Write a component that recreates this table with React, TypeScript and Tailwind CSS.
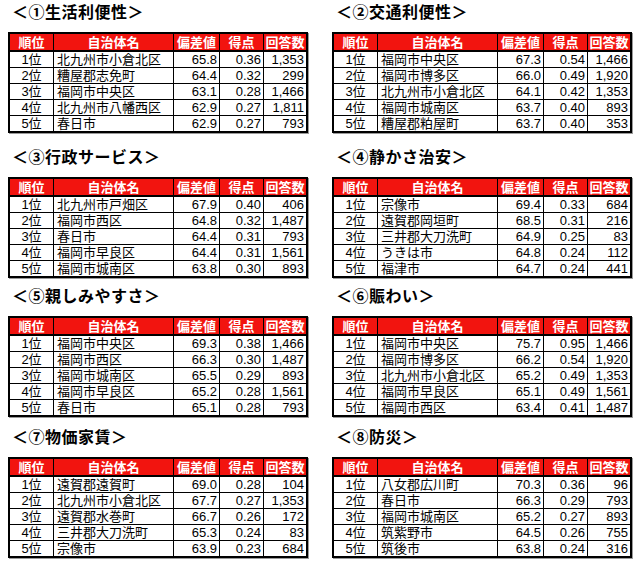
import React from "react";

type Row = [string, string, string, string];
type Block = { title: string; rows: Row[] };

const blocks: Block[] = [
  {
    title: "＜①生活利便性＞",
    rows: [
      ["北九州市小倉北区", "65.8", "0.36", "1,353"],
      ["糟屋郡志免町", "64.4", "0.32", "299"],
      ["福岡市中央区", "63.1", "0.28", "1,466"],
      ["北九州市八幡西区", "62.9", "0.27", "1,811"],
      ["春日市", "62.9", "0.27", "793"],
    ],
  },
  {
    title: "＜②交通利便性＞",
    rows: [
      ["福岡市中央区", "67.3", "0.54", "1,466"],
      ["福岡市博多区", "66.0", "0.49", "1,920"],
      ["北九州市小倉北区", "64.1", "0.42", "1,353"],
      ["福岡市城南区", "63.7", "0.40", "893"],
      ["糟屋郡粕屋町", "63.7", "0.40", "353"],
    ],
  },
  {
    title: "＜③行政サービス＞",
    rows: [
      ["北九州市戸畑区", "67.9", "0.40", "406"],
      ["福岡市西区", "64.8", "0.32", "1,487"],
      ["春日市", "64.4", "0.31", "793"],
      ["福岡市早良区", "64.4", "0.31", "1,561"],
      ["福岡市城南区", "63.8", "0.30", "893"],
    ],
  },
  {
    title: "＜④静かさ治安＞",
    rows: [
      ["宗像市", "69.4", "0.33", "684"],
      ["遠賀郡岡垣町", "68.5", "0.31", "216"],
      ["三井郡大刀洗町", "64.9", "0.25", "83"],
      ["うきは市", "64.8", "0.24", "112"],
      ["福津市", "64.7", "0.24", "441"],
    ],
  },
  {
    title: "＜⑤親しみやすさ＞",
    rows: [
      ["福岡市中央区", "69.3", "0.38", "1,466"],
      ["福岡市西区", "66.3", "0.30", "1,487"],
      ["福岡市城南区", "65.5", "0.29", "893"],
      ["福岡市早良区", "65.2", "0.28", "1,561"],
      ["春日市", "65.1", "0.28", "793"],
    ],
  },
  {
    title: "＜⑥賑わい＞",
    rows: [
      ["福岡市中央区", "75.7", "0.95", "1,466"],
      ["福岡市博多区", "66.2", "0.54", "1,920"],
      ["北九州市小倉北区", "65.2", "0.49", "1,353"],
      ["福岡市早良区", "65.1", "0.49", "1,561"],
      ["福岡市西区", "63.4", "0.41", "1,487"],
    ],
  },
  {
    title: "＜⑦物価家賃＞",
    rows: [
      ["遠賀郡遠賀町", "69.0", "0.28", "104"],
      ["北九州市小倉北区", "67.7", "0.27", "1,353"],
      ["遠賀郡水巻町", "66.7", "0.26", "172"],
      ["三井郡大刀洗町", "65.3", "0.24", "83"],
      ["宗像市", "63.9", "0.23", "684"],
    ],
  },
  {
    title: "＜⑧防災＞",
    rows: [
      ["八女郡広川町", "70.3", "0.36", "96"],
      ["春日市", "66.3", "0.29", "793"],
      ["福岡市城南区", "65.2", "0.27", "893"],
      ["筑紫野市", "64.5", "0.26", "755"],
      ["筑後市", "63.8", "0.24", "316"],
    ],
  },
];

function Table({ block }: { block: Block }) {
  return (
    <div className="flex flex-col">
      <div className="h-[32px] pl-[4px] pt-[2px] text-[16px] font-bold leading-[22px] text-black tracking-[0.5px]">
        {block.title}
      </div>
      <div className="w-[300px] border-2 border-black bg-white shadow-[1px_1px_0_#9a9a9a]">
        <div className="flex h-[18px] border-b-2 border-black bg-[#f2140f] text-[13px] font-bold leading-[18px] text-white">
          <div className="w-[43px] text-center">順位</div>
          <div className="w-[120px] border-l border-black text-center">自治体名</div>
          <div className="w-[46px] border-l border-black text-center">偏差値</div>
          <div className="w-[44px] border-l border-black text-center">得点</div>
          <div className="w-[43px] border-l border-black text-center">回答数</div>
        </div>
        {block.rows.map((r, i) => (
          <div
            key={i}
            className={
              "flex h-[15px] text-[13px] leading-[15px] text-black " +
              (i > 0 ? "box-content border-t border-black" : "")
            }
          >
            <div className="w-[43px] text-center">{i + 1}位</div>
            <div className="w-[120px] border-l border-black pl-[3px] whitespace-nowrap">{r[0]}</div>
            <div className="w-[46px] border-l border-black pr-[2px] text-right">{r[1]}</div>
            <div className="w-[44px] border-l border-black pr-[2px] text-right">{r[2]}</div>
            <div className="w-[43px] border-l border-black pr-[2px] text-right">{r[3]}</div>
          </div>
        ))}
      </div>
    </div>
  );
}

export default function App() {
  return (
    <div
      className="grid h-[571px] w-[640px] grid-cols-[324px_316px] grid-rows-[145px_139px_141px_146px] bg-white pl-[8px]"
      style={{ fontFamily: '"Liberation Sans", "Noto Sans CJK JP", sans-serif' }}
    >
      {blocks.map((b, i) => (
        <div key={i} className={i % 2 === 1 ? "pl-[0px]" : ""}>
          <Table block={b} />
        </div>
      ))}
    </div>
  );
}
